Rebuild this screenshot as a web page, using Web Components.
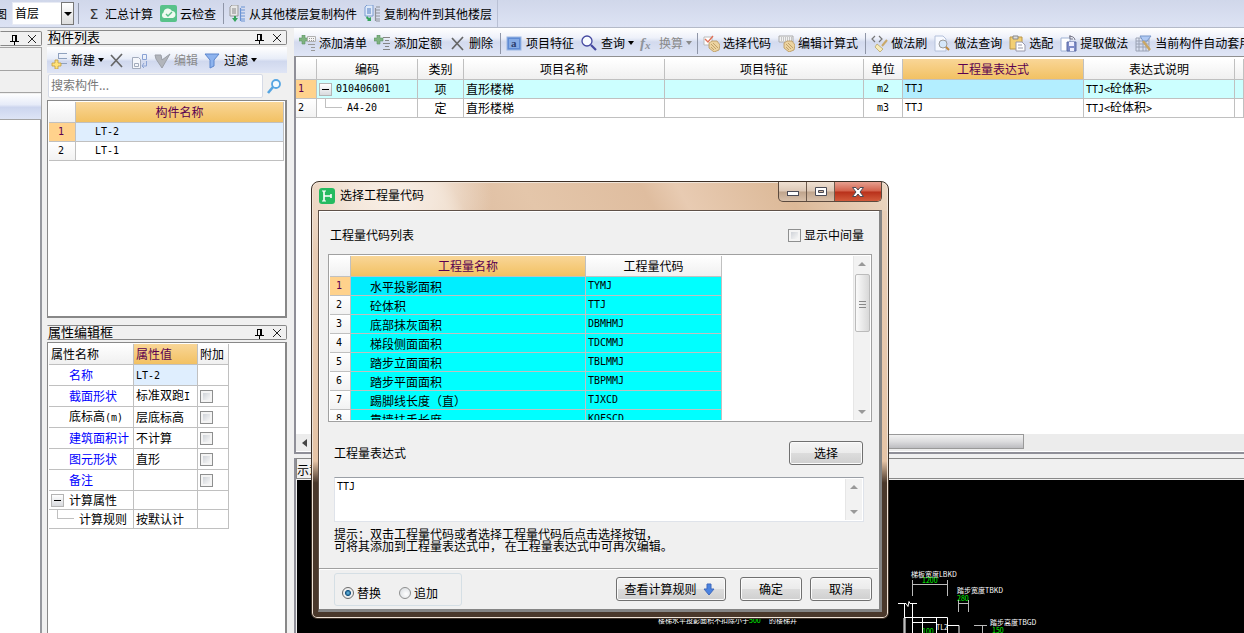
<!DOCTYPE html>
<html lang="zh-CN">
<head>
<meta charset="utf-8">
<title>构件做法</title>
<style>
html,body{margin:0;height:100%}
body{font:12px/16px "Noto Sans CJK SC",sans-serif;color:#000;overflow:hidden;background:#f0f0f0}
</style>
</head>
<body>
<app-shell></app-shell>
<script>
const base = `
*{box-sizing:border-box}
table{border-collapse:separate;border-spacing:0;table-layout:fixed;line-height:16px}
th,td{border:0 solid #c0c0c0;border-width:0 1px 1px 0;padding:0 0 0 2px;font-weight:400;text-align:left;white-space:nowrap;overflow:hidden;height:19px}
th{background:linear-gradient(#fff,#f0f0f0);height:21px;text-align:center;padding:0}
th.on{background:linear-gradient(#f9d697,#f2c163);color:#5a0050}
td.n{background:linear-gradient(#fff,#f2f2f2);text-align:center;padding:0 2px 0 0}
td.n.on{background:#ffd28c;color:#5a0050}
.m,.n{font-family:"DejaVu Sans Mono","Noto Sans CJK SC",monospace;font-size:10px}
.c{text-align:center;padding:0}
button,input,select,textarea{font:inherit;color:inherit;margin:0}
input[type=checkbox]{appearance:none;width:13px;height:13px;border:1px solid #8e8f8f;background:linear-gradient(135deg,#c4c9d0,#f6f6f6 80%);box-shadow:inset 0 0 0 2px #f4f4f4;flex:none;display:block}
.exp{display:inline-block;width:13px;height:13px;border:1px solid #b4b4b4;background:linear-gradient(90deg,#000,#000) center/7px 1px no-repeat,linear-gradient(#fff,#d8dade);flex:none}
.elbow{display:inline-block;border:solid #c0c0c0;border-width:0 0 1px 1px;flex:none}
`;
function component(name, html, after) {
  const t = document.createElement('template');
  customElements.define(name, class extends HTMLElement {
    connectedCallback() {
      if (this.shadowRoot) return;
      t.innerHTML = `<style>${base}</style>` + (typeof html === 'function' ? html(this) : html);
      this.attachShadow({mode: 'open'}).append(t.content.cloneNode(true));
      if (after) after(this.shadowRoot, this);
    }
  });
}

const plus = `<path d="M3 1h3v3h3v3H6v3H3V7H0V4h3z" transform="translate(0 -1)" fill="#7fb381" stroke="#5d9465" stroke-width=".6"/>`;
const hand = `<path d="M6 8l3-2 5 0 3 4-1 5-5 2-5-4z" fill="#ecd3a0" stroke="#b8955a" stroke-width=".8"/><path d="M8 9l5 5M10 8l5 5M8 12l3 3" stroke="#b8955a" stroke-width=".8"/>`;
const icons = {
  pin: `<path d="M6.500 5v6M6 5.500h5M4 11.500h9M8.500 12v3" fill="none" stroke="#000"/><path d="M10 5v6" stroke="#000" stroke-width="2"/>`,
  close: `<path d="M4 5l8 8M12 5l-8 8" stroke="#222" stroke-width="1"/>`,
  cloud: `<rect x="0" y="0" width="17" height="17" rx="2" fill="#58c28a"/><path d="M4 13a3 3 0 0 1-.5-5.500A4.500 4.500 0 0 1 12 6a3.600 3.600 0 0 1 1 7z" fill="#eefaf0"/><path d="M6 9l2 2 4-4" fill="none" stroke="#58c28a" stroke-width="1.400"/>`,
  copyfrom: `<path d="M1 2l2-2h6v11H1z" fill="#e8e8e8" stroke="#999"/><path d="M3 4h4M3 6h4M3 8h4" stroke="#888"/><path d="M5 11v2H3l3 4 3-4H7v-2z" fill="#36a45c"/><path d="M11.500 3v13M12 2h4M12 5h4M12 8h4M12 11h4M12 14h4M12 16h4" stroke="#6a93d4" fill="none" stroke-width="1.200"/>`,
  copyto: `<path d="M1 2l2-2h6v11H1z" fill="#dfeafa" stroke="#7c9cd0"/><path d="M3 4h4M3 6h4M3 8h4" stroke="#4c79c0"/><path d="M3 11l2 2 2-1v4l-4 0 1-1-2-2z" fill="#36a45c"/><path d="M11.500 3v13M12 2h4M12 5h4M12 8h4M12 11h4M12 14h4M12 16h4" stroke="#8e9299" fill="none" stroke-width="1.200"/>`,
  addlist: plus + `<path d="M8.500 1.500h8v5h-8z" fill="#f4f4f4" stroke="#b0b0b0"/><path d="M10 3.500h6M10 5.500h6" stroke="#999" stroke-dasharray="1 1"/><path d="M9 9.500h7M12 12.500h4M12 15.500h4" stroke="#999"/>`,
  addquota: plus + `<path d="M9 2.500h7M11 5.500h4M9 8.500h7M11 11.500h4M9 14.500h7" stroke="#858585"/>`,
  del: `<path d="M3 3l11 12M14 2L3 14" stroke="#666" stroke-width="1.700" fill="none"/>`,
  feature: `<rect x="1" y="2" width="14" height="13" fill="#5f8bd4" stroke="#9cb8e4"/><rect x="3" y="4" width="10" height="9" fill="#86abe4"/><text x="5" y="12" font-size="11" font-weight="700" font-family="Liberation Serif" fill="#2c3f70">a</text>`,
  find: `<circle cx="6" cy="6" r="5" fill="#f8fbff" stroke="#4448a0" stroke-width="1.300"/><path d="M10 10l5 5" stroke="#4448a0" stroke-width="2.200"/>`,
  fx: `<text x="1" y="13" font-size="15" font-style="italic" font-weight="700" font-family="Liberation Serif" fill="#8f949c">f</text><text x="6" y="14" font-size="11" font-style="italic" font-weight="700" font-family="Liberation Serif" fill="#8f949c">x</text>`,
  pick: `<path d="M1 2h8v8H1z" fill="#fff" stroke="#bbb"/><path d="M2 4l3 3 5-6" fill="none" stroke="#e07058" stroke-width="1.400"/>` + hand,
  formula: `<path d="M1 1h14v6H1z" fill="#f2f2f2" stroke="#aaa"/><path d="M3 3h11M3 5h11" stroke="#999" stroke-dasharray="1 1"/>` + hand,
  brush: `<path d="M4 1L1 4l3 3M8 1l3 3-3 3" fill="none" stroke="#777" stroke-width="1.200"/><path d="M16 5l-5 6" stroke="#c9a86a" stroke-width="2"/><path d="M6 9l6 5-3 3-5-5z" fill="#f7ebb8" stroke="#b8a468" stroke-width=".8"/>`,
  docfind: `<path d="M1 1h8l3 3v12H1z" fill="#f7f9ff" stroke="#b4c1da"/><circle cx="9" cy="9" r="4" fill="#d5e7fa" stroke="#9a9a9a"/><path d="M12 12l3 3" stroke="#c08a3e" stroke-width="2"/>`,
  paste: `<path d="M1 2h12v12H1z" fill="#f2cf74" stroke="#bb9648"/><path d="M4 1h5v3H4z" fill="#ddd" stroke="#888"/><path d="M7 7h6l3 3v6H7z" fill="#fff" stroke="#99a"/><path d="M9 10h4M9 13h5" stroke="#99a"/>`,
  extract: `<path d="M1 3h9v13H1z" fill="#fff" stroke="#9fb2d4"/><path d="M9 2a4 4 0 0 1 6 3M10 0v4h3" fill="none" stroke="#778"/><path d="M7 7h9v9H7z" fill="#7f8cc8" stroke="#5a6aa4"/><path d="M9 7h5v4H9zM10 13h4v3h-4z" fill="#eef"/>`,
  auto: `<path d="M1 3h13v13H1zM1 6h13M1 9h13M1 12h13M4 3v13M8 3v13M11 3v13" fill="none" stroke="#9aa2b4"/><path d="M5 1h11l-4 5H8z" fill="#b0caf4" stroke="#7796c8"/><path d="M8 6l7 9" stroke="#c9a663" stroke-width="2.400"/>`,
  create: `<path d="M8 1.500h8M8 6.500h8M8 11.500h8M7.500 1v6" stroke="#8fa1be" fill="none"/><path d="M4 8h3v3h3v3H7v3H4v-3H1v-3h3z" fill="#ffe27a" stroke="#c29c3c" stroke-width=".8"/>`,
  copy: `<path d="M1.500 5.500h6l2 2v9h-8z" fill="#f4f6fb" stroke="#a2abbc"/><path d="M3.500 11.500h4v3h-4z" fill="none" stroke="#a2abbc"/><path d="M11.500 2.500h4v5h-4zM15.500 9v5h-4M13 11l-2 3 2 2" fill="none" stroke="#8aa2d4"/>`,
  check: `<path d="M1 3h6l1 5 8-6-8 14-6-9z" fill="#b2b5bb" stroke="#9b9fa7"/>`,
  funnel: `<path d="M1 2h14l-5 6v6l-4 2V8z" fill="#8db3ee" stroke="#5c86cc"/>`,
  glass: `<circle cx="9" cy="6" r="4" fill="#f3faff" stroke="#55a5e2" stroke-width="1.800"/><path d="M6 9l-5 6" stroke="#55a5e2" stroke-width="2.600"/>`,
  down: `<path d="M6 3h4v5h3l-5 6-5-6h3z" fill="#4b83e0" stroke="#3f69bd"/>`,
  logo: `<rect x="0" y="0" width="16" height="16" rx="3" fill="#25bb60"/><path d="M5 3v10M5 8h7M12 6v4" stroke="#fff" stroke-width="1.600" fill="none"/><path d="M3 3h4M3 13h4" stroke="#fff"/>`
};
component('ui-icon', el => `<style>:host{display:block;width:17px;height:17px;flex:none}svg{display:block}</style>
<svg width="17" height="17" viewBox="0 0 17 17" aria-hidden="true">${icons[el.getAttribute('name')]}</svg>`);

component('tool-button', el => `<style>
:host{display:block;flex:none}:host([menu]){margin-right:-2px}
button{display:flex;align-items:center;gap:3px;border:0;padding:0;background:none;white-space:nowrap;line-height:16px}
:host([off]) button{color:#8a8a8a}
i{width:6px;height:0;border:solid transparent;border-width:4px 3px 0;border-top-color:currentColor}
</style><button type="button" aria-label="${el.getAttribute('hint') || el.textContent}"${el.hasAttribute('off') ? ' disabled' : ''}>${el.getAttribute('icon') ? `<ui-icon name="${el.getAttribute('icon')}"></ui-icon>` : ''}<slot></slot>${el.hasAttribute('menu') ? '<i></i>' : ''}</button>`);

component('tool-sep', `<style>:host{display:block;flex:none;width:1px;height:21px;background:#8f96a8;margin-right:-2px}</style>`);

component('top-bar', `<style>
:host{display:flex;align-items:center;gap:7px;height:28px;flex:none;background:linear-gradient(#d0d7ea,#dde3f4);border-bottom:1px solid #b4bac8;overflow:hidden}
.cut{margin-left:-5px;margin-right:-2px}
.combo{display:grid;width:62px;height:23px;margin-right:-3px}
.combo>*{grid-area:1/1}
select{appearance:none;border:1px solid #e8ebf4;background:#fff;padding:0 0 2px 2px;border-radius:0;width:100%}
.arrow{justify-self:end;width:13px;border:1px solid #777;background:linear-gradient(#fff,#ddd);display:grid;place-items:center;pointer-events:none}
.arrow::after{content:"";border:solid transparent;border-width:4px 4px 0;border-top-color:#000}
.sum{font:14px/16px "DejaVu Sans";width:18px;padding-left:2px;color:#333}
.end{align-self:stretch;width:1px;background:#b9c0d4;margin-left:-2px}
</style>
<span class="cut">图</span>
<label class="combo"><select aria-label="楼层"><option>首层</option></select><span class="arrow"></span></label>
<tool-sep></tool-sep>
<tool-button hint="汇总计算"><span class="sum">Σ</span>汇总计算</tool-button>
<tool-button icon="cloud">云检查</tool-button><tool-sep></tool-sep>
<tool-button icon="copyfrom">从其他楼层复制构件</tool-button>
<tool-button icon="copyto">复制构件到其他楼层</tool-button><span class="end"></span>`);

component('dock-title', `<style>
:host{display:flex;align-items:center;height:15px;border:1px solid #888;border-left-color:transparent;background:#f0f0f0;font-size:13px;line-height:12px;flex:none;border-radius:0 2px 2px 0}
span{flex:1;white-space:nowrap;height:14px}button{border:0;background:none;padding:0;height:17px}button+button{margin-left:1px}
</style><span><slot></slot></span><button type="button" aria-label="固定"><ui-icon name="pin"></ui-icon></button><button type="button" aria-label="关闭"><ui-icon name="close"></ui-icon></button>`);

component('side-strip', `<style>
:host{display:flex;flex-direction:column;width:42px;flex:none;padding-top:3px}
.box{height:22px;border:1px solid #a4a4a4;border-width:1px 1px 0 0}
.box.first{margin-top:1px;height:23px}
.bar{height:28px;background:linear-gradient(#fff,#e6ebf8 45%,#ccd5ee 55%,#dde4f5);border:1px solid #a4a4a4;border-left:0;box-shadow:inset 0 1px #f0f0f0}
.body{flex:1;background:#fff;border-right:2px solid #96989e}
dock-title{overflow:hidden}
</style><dock-title></dock-title><div class="box first"></div><div class="box"></div><div class="bar"></div><div class="body"></div>`);

component('component-list', `<style>
:host{display:flex;flex-direction:column;flex:0 0 288px}
.bar{display:flex;align-items:center;gap:6px;height:26px;margin-top:2px;padding-left:4px;background:linear-gradient(#fff,#e8edf8 45%,#d0d8ee 55%,#dfe5f5)}
.search{display:flex;align-items:center;height:24px;margin:1px 0 2px 1px;gap:4px}
input{flex:1;min-width:0;height:24px;border:1px solid #d5dae6;border-radius:2px;padding:0 0 3px 2px;background:#fff}
input::placeholder{color:#777;opacity:1}
.search button{border:0;padding:0;background:none;margin-right:3px}
.body{flex:1;background:#fff;border:1px solid #888;padding:1px;border-right-width:2px;border-bottom-width:2px}
table{width:100%}td.name{padding-left:19px}
tr.on .name{background:#dfeefe}
</style><dock-title>构件列表</dock-title>
<div class="bar"><tool-button icon="create" menu>新建</tool-button><tool-button icon="del" hint="删除"></tool-button><tool-button icon="copy" hint="复制"></tool-button><tool-button icon="check" off>编辑</tool-button><tool-button icon="funnel" menu>过滤</tool-button></div>
<div class="search"><input type="text" placeholder="搜索构件..." aria-label="搜索构件"><button type="button" aria-label="搜索"><ui-icon name="glass"></ui-icon></button></div>
<div class="body"><table><colgroup><col style="width:27px"><col></colgroup>
<thead><tr><th></th><th class="on">构件名称</th></tr></thead>
<tbody><tr class="on"><td class="n on">1</td><td class="name m">LT-2</td></tr><tr><td class="n">2</td><td class="name m">LT-1</td></tr></tbody></table></div>`);

component('property-editor', () => {
  const rows = [['名称','<span class="m">LT-2</span>',0,'sel'],['截面形状','标准双跑<span class="m">I</span>',1],['底标高<span class="m">(m)</span>','层底标高',1,'blk'],['建筑面积计','不计算',1],['图元形状','直形',1],['备注','',1]];
  return `<style>
:host{display:flex;flex-direction:column;flex:1;min-height:0}
.body{flex:1;background:#fff;border:1px solid #888;border-bottom:0;margin-top:2px;padding:1px;border-right-width:2px}
table{width:180px}th{text-align:left;padding-left:2px}
td{height:21px}td:first-child{padding-left:20px;color:#00f}
tr.blk td:first-child,tr.s td:first-child{color:#000}
tr.sel td:nth-child(2){background:#dfeefe}
td input[type=checkbox]{display:block}
tr.s td{height:19px}.tree{display:flex;align-items:center}
tr.s td.tree{padding-left:2px;gap:5px}
.elbow{width:17px;height:9px;align-self:flex-start;margin-left:6px}
</style><dock-title>属性编辑框</dock-title><div class="body"><table><colgroup><col style="width:85px"><col style="width:64px"><col></colgroup>
<thead><tr><th>属性名称</th><th class="on">属性值</th><th>附加</th></tr></thead><tbody>
${rows.map(r => `<tr class="${r[3] || ''}"><td>${r[0]}</td><td>${r[1]}</td><td>${r[2] ? '<input type="checkbox" aria-label="附加">' : ''}</td></tr>`).join('')}
<tr class="s"><td class="tree"><span class="exp"></span>计算属性</td><td></td><td></td></tr>
<tr class="s"><td class="tree"><span class="elbow"></span>计算规则</td><td>按默认计</td><td></td></tr></tbody></table></div>`;
});

component('method-toolbar', `<style>
:host{display:flex;align-items:center;gap:7px;height:29px;flex:none;padding:2px 0 0 5px;overflow:hidden;background:linear-gradient(#fff,#eef1fa 35%,#d3daee 50%,#e0e6f6);border-bottom:1px solid #909090}
</style>
<tool-button icon="addlist">添加清单</tool-button><tool-button icon="addquota">添加定额</tool-button><tool-button icon="del">删除</tool-button><tool-sep></tool-sep>
<tool-button icon="feature">项目特征</tool-button><tool-button icon="find" menu>查询</tool-button><tool-button icon="fx" menu off>换算</tool-button><tool-sep></tool-sep>
<tool-button icon="pick">选择代码</tool-button><tool-button icon="formula">编辑计算式</tool-button><tool-sep></tool-sep>
<tool-button icon="brush">做法刷</tool-button><tool-button icon="docfind">做法查询</tool-button><tool-button icon="paste">选配</tool-button><tool-button icon="extract">提取做法</tool-button><tool-button icon="auto">当前构件自动套用做法</tool-button>`);

component('method-grid', `<style>
:host{display:flex;flex-direction:column;flex:1;min-height:0;background:#fff;border:solid #8f8f98;border-width:0 0 2px 2px}
.view{flex:1;padding-top:2px;overflow:hidden}
table{width:100%}td.n{text-align:left;padding-left:2px}
tr.on td:not(.n){background:#cff}tr.on td.cur:not(.n){background:#b3eeff}
.tree{padding-left:2px}.tree div{display:flex;align-items:center;gap:4px;height:18px}
.elbow{width:17px;height:9px;align-self:flex-start;margin:0 1px 0 6px}
.scroll{display:flex;height:17px;background:#ececec;margin-bottom:1px}
.scroll button{width:17px;border:0;background:none;padding:0 0 0 6px}
.scroll button::after{content:"";display:block;width:0;border:solid transparent;border-width:4px 5px 4px 0;border-right-color:#444}
.thumb{width:75%;height:15px;border:1px solid #999;background:linear-gradient(#f2f2f2,#dcdcde 50%,#bcbcc0)}
</style><div class="view"><table><colgroup><col style="width:21px"><col style="width:101px"><col style="width:46px"><col style="width:201px"><col style="width:199px"><col style="width:39px"><col style="width:181px"><col style="width:151px"><col></colgroup>
<thead><tr><th></th><th>编码</th><th>类别</th><th>项目名称</th><th>项目特征</th><th>单位</th><th class="on">工程量表达式</th><th>表达式说明</th><th></th></tr></thead>
<tbody><tr class="on"><td class="n on">1</td><td class="tree m"><div><span class="exp"></span>010406001</div></td><td class="c">项</td><td>直形楼梯</td><td></td><td class="c m">m2</td><td class="cur m">TTJ</td><td><span class="m">TTJ&lt;</span>砼体积<span class="m">&gt;</span></td><td></td></tr>
<tr><td class="n">2</td><td class="tree m"><div><span class="elbow"></span>A4-20</div></td><td class="c">定</td><td>直形楼梯</td><td></td><td class="c m">m3</td><td class="m">TTJ</td><td><span class="m">TTJ&lt;</span>砼体积<span class="m">&gt;</span></td><td></td></tr></tbody></table></div>
<div class="scroll"><button type="button" aria-label="向左滚动"></button><div class="thumb"></div></div>`);

component('diagram-view', `<style>
:host{display:flex;flex-direction:column;flex:0 0 175px;border-left:2px solid #8f8f98;padding-left:1px;overflow:hidden;margin-top:4px}
header{height:21px;border:1px solid #888;border-right:0;margin-left:-1px;line-height:22px;margin-bottom:1px;flex:none}
svg{flex:1;background:#000;width:100%;display:block}
text{font-size:7px;fill:#fff}.g{fill:#0f0}
path{fill:none;stroke:#bbb;stroke-width:1}.w{stroke:#fff}
</style><header>示意图</header>
<svg role="img" aria-label="楼梯示意图">
<text x="361" y="143">楼梯水平投影面积不扣除小于</text><text class="g" x="452" y="143">500</text><text x="472" y="143">的楼梯井</text>
<text x="614" y="97">梯板宽度LBKD</text><text class="g" x="625" y="103">1200</text>
<path d="M615.500 100v16M650.500 100v16M615 104.500h36"/>
<text x="660" y="113">踏步宽度TBKD</text><text class="g" x="660" y="121">280</text>
<path d="M661.500 120v12M671.500 120v12M661 123.500h11"/>
<text x="693" y="145">踏步高度TBGD</text><text class="g" x="695" y="153">150</text>
<path d="M677 145.500h13M685.500 145v8"/>
<path class="w" d="M601 123.500h8l2 3 1-5 1 2h7M607.500 124v14M615.500 124v14M607.500 137.500h43v16M607 138v15M608 138v15M615.500 137v16M615 142.500h24M625.500 137v16M639.500 137v16M650 145.500h12v8"/>
<text x="639" y="150">TL2</text><text class="g" x="625" y="154">100</text>
</svg>`);

component('scroll-bar', `<style>
:host{display:flex;flex-direction:column;width:17px;background:#f2f2f2;border-left:1px solid #e6e6e6;align-items:center;flex:none;padding:6px 0}
i{border:solid transparent;border-width:0 4px 4px;border-bottom-color:#999}
i:last-child{border-width:4px 4px 0;border-top-color:#999;margin-top:auto}
</style><i></i><slot></slot><i></i>`);

component('push-button', `<style>
:host{display:block}
button{display:flex;align-items:center;justify-content:center;gap:4px;width:100%;height:24px;padding:0;border:1px solid #707070;border-radius:3px;background:linear-gradient(#f4f4f4,#ebebeb 50%,#dcdcdc 52%,#cfcfcf);box-shadow:inset 0 0 0 1px #fbfbfb}
</style><button type="button"><slot></slot></button>`);

component('code-dialog', () => {
  const rows = [['水平投影面积','TYMJ'],['砼体积','TTJ'],['底部抹灰面积','DBMHMJ'],['梯段侧面面积','TDCMMJ'],['踏步立面面积','TBLMMJ'],['踏步平面面积','TBPMMJ'],['踢脚线长度（直）','TJXCD'],['靠墙扶手长度','KQFSCD']];
  return `<style>
:host{display:block;position:absolute;left:311px;top:181px;width:578px;border:1px solid #3c3027;border-radius:8px 8px 6px 6px;padding:0 6px 6px;background:radial-gradient(ellipse at 80px 15px,#f8efe6 0,#f4e7db 40px,transparent 100px),linear-gradient(60deg,#e8cdb5 0,#ecd5c0 23%,#dfbfa3 26%,#e4c6aa 38%,#dfbd9f 58%,#e8cbb2 64%,#dcb998 82%,#ecd8c4) 0 0/100% 29px no-repeat,linear-gradient(#e9cfb8,#e6c4a6 64%,#4a382b 69%,#4a382b);box-shadow:inset 0 0 0 1px #f0e4d8}
.title{display:flex;height:28px;align-items:flex-start}
.title ui-icon{margin:6px 4px 0 1px}.title b{font-weight:400;flex:1;margin-top:5px}
.win{display:flex;border:1px solid #5b4a3e;border-top:0;border-radius:0 0 5px 5px;height:20px;overflow:hidden;background:linear-gradient(#efe0d2,#dcc8b6 48%,#bfa48c 52%,#d8c0aa)}
.win button{border:0;border-right:1px solid #6d5a4c;padding:0;width:28px;background:none;display:grid;place-items:center}
.win button.x{width:46px;border:0;background:linear-gradient(#e6a090,#d2604a 48%,#b8301a 52%,#d25a3a)}
.client{border:1px solid #5f5148;border-right:3px solid #858585;border-bottom:3px solid #858585;background:#f0f0f0;box-shadow:inset 1px 1px #fff;padding-right:1px}
.row{display:flex;align-items:center;justify-content:space-between}
.head{padding:16px 14px 11px 11px}
label{display:flex;align-items:center;gap:3px}
.list{display:flex;margin:0 6px 0 9px;height:168px;border:1px solid #a0a0a0;background:#fff;padding:1px;overflow:hidden}
.list .in{flex:1;overflow:hidden}
table{width:392px}
tbody td:not(.n){background:#0ff}tbody tr:first-child td:nth-child(2){background:#00eeff}
tbody td{background-clip:padding-box!important}
td.name{padding:1px 0 0 19px}
.thumb{width:15px;height:58px;border:1px solid #bbb;border-radius:2px;margin-top:8px;background:linear-gradient(#888,#888) center 26px/7px 1px no-repeat,linear-gradient(#888,#888) center 29px/7px 1px no-repeat,linear-gradient(#888,#888) center 32px/7px 1px no-repeat,linear-gradient(90deg,#fafafa,#d8d8d8)}
.expr{padding:19px 15px 12px 15px}.expr push-button{width:74px}
.edit{display:flex;height:45px;margin:0 14px 0 15px;background:#fff;border:1px solid #dfe3ea;border-top-color:#9a9fa6;padding:1px}
textarea{flex:1;border:0;padding:0 1px;resize:none;outline:0;background:none;overflow:hidden;line-height:16px}
p{margin:6px 0 16px 15px;line-height:12px}
footer{display:flex;align-items:center;border-top:1px solid #a0a0a0;box-shadow:inset 0 1px #fff;padding:4px 6px 4px 15px;height:41px}
fieldset{display:flex;gap:18px;margin:0 auto 0 0;width:128px;height:33px;padding:11px 0 0 7px;border:1px solid #d5dfe5;border-radius:3px}
fieldset label{height:16px}
input[type=radio]{appearance:none;width:12px;height:12px;border:1px solid #8e8f8f;border-radius:50%;background:radial-gradient(circle at 60% 60%,#fff,#d4d8dc);flex:none}
input[type=radio]:checked{background:radial-gradient(circle,#6fc3ea 0,#12507e 38%,#eee 46%);border-color:#6a6a6a}
.rule{width:110px;margin-right:14px}.ok{width:62px;margin-right:8px}.no{width:62px}
</style>
<div class="title"><ui-icon name="logo"></ui-icon><b>选择工程量代码</b>
<div class="win"><button type="button" aria-label="最小化"><svg width="14" height="10"><rect x="1.500" y="4.500" width="11" height="4" fill="#fff" stroke="#4a4a55"/></svg></button><button type="button" aria-label="最大化"><svg width="14" height="11"><path d="M1.500 1.500h11v8h-11zM4.500 4.500v2h5v-2z" fill="#fff" fill-rule="evenodd" stroke="#4a4a55"/></svg></button><button type="button" class="x" aria-label="关闭"><svg width="14" height="12"><path d="M1.500 1.500h3.500l2 2.500 2-2.500h3.500l-3.500 4.500 3.500 4.500h-3.500l-2-2.500-2 2.500h-3.500l3.500-4.500z" fill="#fff" stroke="#4a4a55"/></svg></button></div></div>
<div class="client">
<div class="row head"><span>工程量代码列表</span><label><input type="checkbox">显示中间量</label></div>
<div class="list"><div class="in"><table><colgroup><col style="width:21px"><col style="width:235px"><col></colgroup><thead><tr><th></th><th class="on">工程量名称</th><th>工程量代码</th></tr></thead><tbody>
${rows.map((r, i) => `<tr><td class="n${i ? '' : ' on'}">${i + 1}</td><td class="name">${r[0]}</td><td class="m">${r[1]}</td></tr>`).join('')}</tbody></table></div><scroll-bar><div class="thumb"></div></scroll-bar></div>
<div class="row expr"><span id="el">工程量表达式</span><push-button>选择</push-button></div>
<div class="edit"><textarea class="m" aria-labelledby="el">TTJ</textarea><scroll-bar></scroll-bar></div>
<p>提示：双击工程量代码或者选择工程量代码后点击选择按钮，<br>可将其添加到工程量表达式中， 在工程量表达式中可再次编辑。</p>
<footer><fieldset aria-label="方式"><label><input type="radio" name="mode" checked>替换</label><label><input type="radio" name="mode">追加</label></fieldset>
<push-button class="rule">查看计算规则<ui-icon name="down"></ui-icon></push-button><push-button class="ok">确定</push-button><push-button class="no">取消</push-button></footer>
</div>`;
});

component('app-shell', `<style>
:host{display:flex;flex-direction:column;height:100vh;overflow:hidden}
main{display:flex;flex:1;min-height:0}
.docks{display:flex;flex-direction:column;gap:7px;width:240px;flex:none;margin:2px 7px 0 5px}
.work{display:flex;flex-direction:column;flex:1;min-width:0}
</style><top-bar></top-bar><main><side-strip></side-strip><div class="docks"><component-list></component-list><property-editor></property-editor></div>
<div class="work"><method-toolbar></method-toolbar><method-grid></method-grid><diagram-view></diagram-view></div></main><code-dialog></code-dialog>`);
</script>
</body>
</html>
